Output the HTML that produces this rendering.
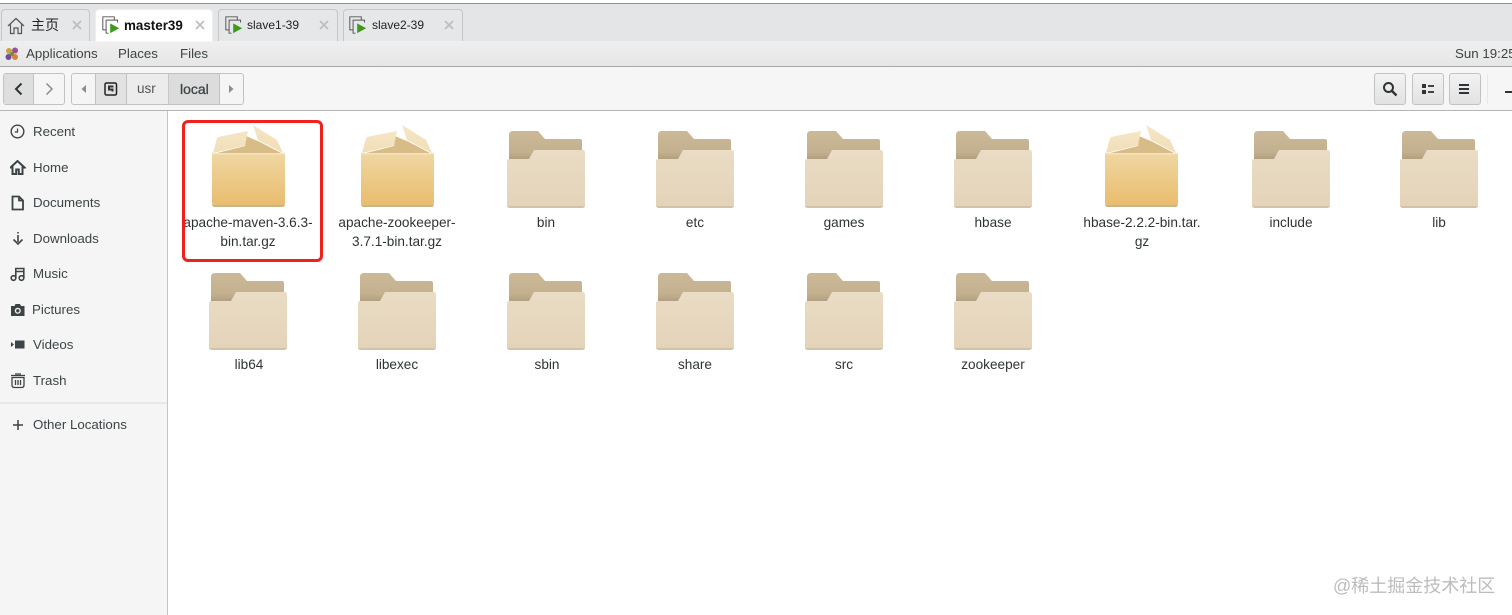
<!DOCTYPE html>
<html><head><meta charset="utf-8">
<style>
*{box-sizing:border-box}
html,body{margin:0;padding:0;width:1512px;height:615px;overflow:hidden;background:#fff;font-family:"Liberation Sans","Noto Sans CJK SC",sans-serif;color:#2e3436}
#w{position:relative;width:1512px;height:615px;overflow:hidden;background:#fff;filter:blur(.35px)}
.a{position:absolute}
.t{position:absolute;white-space:nowrap}
.tab{position:absolute;top:9px;height:32px;border:1px solid #c4c6c8;border-bottom:none;border-radius:4px 4px 0 0;background:#e6e7e8}
.x{position:absolute;top:20px}
.side{position:absolute;left:33px;font-size:13.300px;color:#3d4446;line-height:18px;white-space:nowrap}
.lab{position:absolute;width:140px;text-align:center;font-size:13.600px;line-height:19px;color:#2e3436}
.btn{position:absolute;top:73px;height:32px;width:32px;border:1px solid #c2c2c2;border-radius:3px;background:linear-gradient(#f2f2f2,#e2e2e2)}
</style></head>
<body>
<svg width="0" height="0" style="position:absolute">
<defs>
<linearGradient id="fb" x1="0" y1="0" x2="0" y2="1"><stop offset="0" stop-color="#cbb998"/><stop offset=".7" stop-color="#c3b08e"/><stop offset="1" stop-color="#ab9a7b"/></linearGradient>
<linearGradient id="ff" x1="0" y1="0" x2="0" y2="1"><stop offset="0" stop-color="#eadcc5"/><stop offset="1" stop-color="#e3d3b9"/></linearGradient>
<linearGradient id="pk" x1="0" y1="0" x2="0" y2="1"><stop offset="0" stop-color="#efd6a2"/><stop offset="1" stop-color="#e9bd6e"/></linearGradient>
<linearGradient id="fl" x1="0" y1="0" x2="0" y2="1"><stop offset="0" stop-color="#f5e6c6"/><stop offset="1" stop-color="#f0deb6"/></linearGradient>
<symbol id="folder" viewBox="0 0 80 78" overflow="visible">
<path d="M2 4Q2 0 6 0H31L38 8H73Q75 8 75 10V30H2Z" fill="url(#fb)"/>
<path d="M2 28H22L27 19H76Q78 19 78 22V73Q78 75 75 75H3Q0 75 0 73V30Q0 28 2 28Z" fill="url(#ff)"/>
<path d="M0 73Q0 75 3 75H75Q78 75 78 73V74Q78 77 75 77H3Q0 77 0 74Z" fill="#d2c3a8"/>
</symbol>
<symbol id="pack" viewBox="0 0 74 84" overflow="visible">
<path d="M34 12L48 18L71 30H1L33 22Z" fill="#d8bc88"/>
<path d="M1 29L5 14Q6 13 8 12.500L36 7L33 21.500Z" fill="url(#fl)"/>
<path d="M41 1L65 16L71 29L46 16Z" fill="url(#fl)"/>
<path d="M0 29.500H73V78Q73 81 70 81H3Q0 81 0 78Z" fill="url(#pk)"/>
<path d="M0 29H73V30.500H0Z" fill="#f4e3bd"/>
<path d="M0 79Q0 81 3 81H70Q73 81 73 79V80Q73 83 70 83H3Q0 83 0 80Z" fill="#c9b58c"/>
</symbol>
<symbol id="vm" viewBox="0 0 22 22" overflow="visible">
<path d="M5 17H1V1H15V5" fill="none" stroke="#555" stroke-width="1.200"/>
<path d="M8 21H5V5H19V8" fill="none" stroke="#555" stroke-width="1.200"/>
<path d="M10 9L21 15L10 21Z" fill="#3f9a1c"/>
</symbol>
<symbol id="cl" viewBox="0 0 10 10" overflow="visible"><path d="M1 1L9 9M9 1L1 9" stroke="#bcbebf" stroke-width="1.800"/></symbol>
</defs>
</svg>
<div id="w">
<!-- top strip -->
<div class="a" style="left:0;top:0;width:1512px;height:42px;background:#e4e5e6"></div>
<div class="a" style="left:0;top:0;width:1512px;height:3px;background:#fff"></div>
<div class="a" style="left:0;top:3px;width:1512px;height:1px;background:#8f9090"></div>

<div class="tab" style="left:1px;width:89px"></div>
<svg class="a" style="left:7px;top:17px" width="18" height="18" viewBox="0 0 18 18"><path d="M1 9L9 1.500L17 9M3.500 7.500V16.500H7V11H11V16.500H14.500V7.500" fill="none" stroke="#555" stroke-width="1.200"/></svg>
<div class="t" style="left:31px;top:15px;font-size:14px;line-height:20px;color:#222">主页</div>
<svg class="x" style="left:72px" width="10" height="10"><use href="#cl" width="10" height="10"/></svg>

<div class="tab" style="left:95px;width:118px;background:#fff;border-color:#eee;height:33px"></div>
<svg class="a" style="left:102px;top:16px" width="18" height="18"><use href="#vm" width="18" height="18"/></svg>
<div class="t" style="left:124px;top:16px;font-size:13.400px;font-weight:bold;line-height:19px;color:#111">master39</div>
<svg class="x" style="left:195px" width="10" height="10"><use href="#cl" width="10" height="10"/></svg>

<div class="tab" style="left:218px;width:120px"></div>
<svg class="a" style="left:225px;top:16px" width="18" height="18"><use href="#vm" width="18" height="18"/></svg>
<div class="t" style="left:247px;top:16px;font-size:12px;line-height:19px;color:#222">slave1-39</div>
<svg class="x" style="left:319px" width="10" height="10"><use href="#cl" width="10" height="10"/></svg>

<div class="tab" style="left:343px;width:120px"></div>
<svg class="a" style="left:349px;top:16px" width="18" height="18"><use href="#vm" width="18" height="18"/></svg>
<div class="t" style="left:372px;top:16px;font-size:12px;line-height:19px;color:#222">slave2-39</div>
<svg class="x" style="left:444px" width="10" height="10"><use href="#cl" width="10" height="10"/></svg>

<!-- panel -->
<div class="a" style="left:0;top:41px;width:1512px;height:25px;background:linear-gradient(#efefef,#e6e6e6)"></div>
<div class="a" style="left:95px;top:41px;width:118px;height:1px;background:#f6f6f6"></div>
<div class="a" style="left:0;top:66px;width:1512px;height:1px;background:#a9a9a9"></div>
<svg class="a" style="left:5px;top:47px" width="14" height="14" viewBox="0 0 14 14"><circle cx="4" cy="4" r="3" fill="#c9a33a"/><circle cx="10" cy="3.500" r="3" fill="#9a4f90"/><circle cx="3.500" cy="10" r="3" fill="#6c4f9c"/><circle cx="10" cy="10" r="3" fill="#d8833a"/><circle cx="7" cy="7" r="2" fill="#7a8a4a"/></svg>
<div class="t" style="left:26px;top:45px;font-size:13.300px;line-height:18px;color:#3d4446">Applications</div>
<div class="t" style="left:118px;top:45px;font-size:13.300px;line-height:18px;color:#3d4446">Places</div>
<div class="t" style="left:180px;top:45px;font-size:13.300px;line-height:18px;color:#3d4446">Files</div>
<div class="t" style="left:1455px;top:45px;font-size:13.300px;line-height:18px;color:#3d4446">Sun 19:25</div>

<!-- toolbar -->
<div class="a" style="left:0;top:67px;width:1512px;height:43px;background:#f6f6f6"></div>
<div class="a" style="left:0;top:110px;width:1512px;height:1px;background:#b5b5b5"></div>

<div class="a" style="left:3px;top:73px;width:62px;height:32px;border:1px solid #c2c2c2;border-radius:3px;background:#f5f5f5"></div>
<div class="a" style="left:4px;top:74px;width:30px;height:30px;background:#dedede;border-right:1px solid #c2c2c2"></div>
<svg class="a" style="left:13px;top:82px" width="12" height="14"><path d="M8.500 1.500L3 7L8.500 12.500" fill="none" stroke="#2e3436" stroke-width="2"/></svg>
<svg class="a" style="left:43px;top:82px" width="12" height="14"><path d="M3.500 1.500L9 7L3.500 12.500" fill="none" stroke="#8b8e8f" stroke-width="1.500"/></svg>

<div class="a" style="left:71px;top:73px;width:173px;height:32px;border:1px solid #c2c2c2;border-radius:3px;background:#f5f5f5"></div>
<div class="a" style="left:95px;top:74px;width:32px;height:30px;background:#e2e2e2;border-left:1px solid #c2c2c2;border-right:1px solid #c2c2c2"></div>
<div class="a" style="left:127px;top:74px;width:42px;height:30px;background:#ececec;border-right:1px solid #c8c8c8"></div>
<div class="a" style="left:169px;top:74px;width:51px;height:30px;background:#dcdcdc;border-right:1px solid #c2c2c2"></div>
<svg class="a" style="left:80px;top:84px" width="8" height="10"><path d="M6 1V9L1.500 5Z" fill="#8b8e8f"/></svg>
<svg class="a" style="left:104px;top:82px" width="14" height="14" viewBox="0 0 14 14"><rect x="1" y="1" width="11.500" height="12" rx="1.500" fill="none" stroke="#222" stroke-width="1.500"/><path d="M9.500 4.500H5V7.500H8.500V9.500" fill="none" stroke="#333" stroke-width="2"/></svg>
<div class="t" style="left:137px;top:80px;font-size:13.500px;line-height:18px;color:#555">usr</div>
<div class="t" style="left:180px;top:80px;font-size:14px;line-height:18px;color:#3d4446;-webkit-text-stroke:.3px #3d4446">local</div>
<svg class="a" style="left:227px;top:84px" width="8" height="10"><path d="M2 1V9L6.500 5Z" fill="#8b8e8f"/></svg>

<div class="btn" style="left:1374px"></div>
<svg class="a" style="left:1382px;top:81px" width="16" height="16" viewBox="0 0 16 16"><circle cx="6.500" cy="6.500" r="4.500" fill="none" stroke="#2e3436" stroke-width="2"/><path d="M10 10L14.500 14.500" stroke="#2e3436" stroke-width="2.400"/></svg>
<div class="btn" style="left:1412px"></div>
<svg class="a" style="left:1421px;top:83px" width="14" height="12"><rect x="1" y="1" width="4" height="4" fill="#2e3436"/><rect x="1" y="7" width="4" height="4" fill="#2e3436"/><rect x="7" y="2" width="6" height="2" fill="#444"/><rect x="7" y="8" width="6" height="2" fill="#444"/></svg>
<div class="btn" style="left:1449px"></div>
<svg class="a" style="left:1458px;top:83px" width="14" height="12"><rect x="1" y="1" width="10" height="2" fill="#2e3436"/><rect x="1" y="5" width="10" height="2" fill="#2e3436"/><rect x="1" y="9" width="10" height="2" fill="#2e3436"/></svg>
<div class="a" style="left:1487px;top:74px;width:1px;height:30px;background:#e8e8e8"></div>
<div class="a" style="left:1505px;top:91px;width:7px;height:2px;background:#333"></div>

<!-- sidebar -->
<div class="a" style="left:0;top:111px;width:167px;height:504px;background:#f5f5f5"></div>
<div class="a" style="left:167px;top:111px;width:1px;height:504px;background:#c5c5c5"></div>
<div class="a" style="left:0;top:402px;width:167px;height:2px;background:#e8e8e8"></div>

<svg class="a" style="left:10px;top:124px" width="16" height="16" viewBox="0 0 16 16"><circle cx="7.500" cy="7.500" r="6.300" fill="none" stroke="#3d4446" stroke-width="1.400"/><path d="M7.500 4.500V8H4.800" fill="none" stroke="#3d4446" stroke-width="1.200"/></svg>
<div class="side" style="top:123px">Recent</div>
<svg class="a" style="left:10px;top:160px" width="16" height="16" viewBox="0 0 16 16"><path d="M.5 7.500L7.500 1L14.500 7.500H12.500V14H8.800V9.500H6.200V14H2.500V7.500Z" fill="none" stroke="#3d4446" stroke-width="2"/></svg>
<div class="side" style="top:159px">Home</div>
<svg class="a" style="left:10px;top:195px" width="16" height="16" viewBox="0 0 16 16"><path d="M2.500 1.500H9L13 5.500V14.500H2.500Z M9 1.500V5.500H13" fill="none" stroke="#3d4446" stroke-width="1.800"/></svg>
<div class="side" style="top:194px">Documents</div>
<svg class="a" style="left:10px;top:231px" width="16" height="16" viewBox="0 0 16 16"><path d="M8 1V2.500M8 4V11M3.500 8.500L8 13L12.500 8.500" fill="none" stroke="#3d4446" stroke-width="1.600"/></svg>
<div class="side" style="top:230px">Downloads</div>
<svg class="a" style="left:10px;top:266px" width="16" height="16" viewBox="0 0 16 16"><circle cx="3.500" cy="12" r="2.300" fill="none" stroke="#3d4446" stroke-width="1.600"/><circle cx="11.500" cy="12" r="2.300" fill="none" stroke="#3d4446" stroke-width="1.600"/><path d="M5.800 12V2.500H13.800V12M5.800 5.500H13.800" fill="none" stroke="#3d4446" stroke-width="1.600"/></svg>
<div class="side" style="top:265px">Music</div>
<svg class="a" style="left:10px;top:302px" width="16" height="16" viewBox="0 0 16 16"><path d="M1 4H4.500L5.500 2H10L11 4H14.500V14H1Z" fill="#3d4446"/><circle cx="7.800" cy="8.800" r="3" fill="#f5f5f5"/><circle cx="7.800" cy="8.800" r="1.700" fill="#3d4446"/></svg>
<div class="side" style="left:32px;top:301px">Pictures</div>
<svg class="a" style="left:10px;top:337px" width="16" height="16" viewBox="0 0 16 16"><rect x="5" y="3.500" width="9.500" height="8" fill="#3d4446"/><path d="M1 5V10L4 7.500Z" fill="#3d4446"/></svg>
<div class="side" style="top:336px">Videos</div>
<svg class="a" style="left:10px;top:372px" width="16" height="17" viewBox="0 0 16 17"><path d="M2 5.500H14V13Q14 15.500 11.500 15.500H4.500Q2 15.500 2 13Z M1 3.500H15 M5 2H11 M5.500 8V13M8 8V13M10.500 8V13" fill="none" stroke="#3d4446" stroke-width="1.300"/></svg>
<div class="side" style="top:372px">Trash</div>
<svg class="a" style="left:11px;top:418px" width="14" height="14"><path d="M7 2V12M2 7H12" stroke="#3d4446" stroke-width="1.500"/></svg>
<div class="side" style="top:416px">Other Locations</div>

<!-- row 1 -->
<svg class="a" style="left:212px;top:124px" width="74" height="84"><use href="#pack" width="74" height="84"/></svg>
<svg class="a" style="left:361px;top:124px" width="74" height="84"><use href="#pack" width="74" height="84"/></svg>
<svg class="a" style="left:507px;top:131px" width="80" height="78"><use href="#folder" width="80" height="78"/></svg>
<svg class="a" style="left:656px;top:131px" width="80" height="78"><use href="#folder" width="80" height="78"/></svg>
<svg class="a" style="left:805px;top:131px" width="80" height="78"><use href="#folder" width="80" height="78"/></svg>
<svg class="a" style="left:954px;top:131px" width="80" height="78"><use href="#folder" width="80" height="78"/></svg>
<svg class="a" style="left:1105px;top:124px" width="74" height="84"><use href="#pack" width="74" height="84"/></svg>
<svg class="a" style="left:1252px;top:131px" width="80" height="78"><use href="#folder" width="80" height="78"/></svg>
<svg class="a" style="left:1400px;top:131px" width="80" height="78"><use href="#folder" width="80" height="78"/></svg>

<div class="lab" style="left:178px;top:213px">apache-maven-3.6.3-<br>bin.tar.gz</div>
<div class="lab" style="left:327px;top:213px">apache-zookeeper-<br>3.7.1-bin.tar.gz</div>
<div class="lab" style="left:476px;top:213px">bin</div>
<div class="lab" style="left:625px;top:213px">etc</div>
<div class="lab" style="left:774px;top:213px">games</div>
<div class="lab" style="left:923px;top:213px">hbase</div>
<div class="lab" style="left:1072px;top:213px">hbase-2.2.2-bin.tar.<br>gz</div>
<div class="lab" style="left:1221px;top:213px">include</div>
<div class="lab" style="left:1369px;top:213px">lib</div>

<!-- row 2 -->
<svg class="a" style="left:209px;top:273px" width="80" height="78"><use href="#folder" width="80" height="78"/></svg>
<svg class="a" style="left:358px;top:273px" width="80" height="78"><use href="#folder" width="80" height="78"/></svg>
<svg class="a" style="left:507px;top:273px" width="80" height="78"><use href="#folder" width="80" height="78"/></svg>
<svg class="a" style="left:656px;top:273px" width="80" height="78"><use href="#folder" width="80" height="78"/></svg>
<svg class="a" style="left:805px;top:273px" width="80" height="78"><use href="#folder" width="80" height="78"/></svg>
<svg class="a" style="left:954px;top:273px" width="80" height="78"><use href="#folder" width="80" height="78"/></svg>

<div class="lab" style="left:179px;top:355px">lib64</div>
<div class="lab" style="left:327px;top:355px">libexec</div>
<div class="lab" style="left:477px;top:355px">sbin</div>
<div class="lab" style="left:625px;top:355px">share</div>
<div class="lab" style="left:774px;top:355px">src</div>
<div class="lab" style="left:923px;top:355px">zookeeper</div>

<!-- highlight -->
<div class="a" style="left:182px;top:120px;width:141px;height:142px;border:3px solid #f0201c;border-radius:6px"></div>

<!-- watermark -->
<div class="t" style="left:1333px;top:575px;font-size:18px;line-height:22px;color:#bcbcbc">@稀土掘金技术社区</div>
</div>
</body></html>
